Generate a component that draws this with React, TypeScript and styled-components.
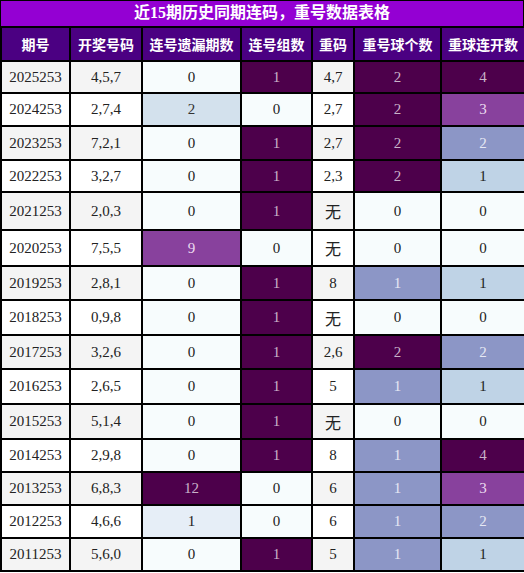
import styled, { createGlobalStyle } from "styled-components";

const GlobalStyle = createGlobalStyle`
  body {
    margin: 0;
    background: #ffffff;
  }
`;

type Row = {
  qh: string;
  kj: string;
  yl: number;
  zs: number;
  cm: string;
  cg: number;
  cl: number;
  h: number;
};

const rows: Row[] = [
  { qh: "2025253", kj: "4,5,7", yl: 0, zs: 1, cm: "4,7", cg: 2, cl: 4, h: 32 },
  { qh: "2024253", kj: "2,7,4", yl: 2, zs: 0, cm: "2,7", cg: 2, cl: 3, h: 33 },
  { qh: "2023253", kj: "7,2,1", yl: 0, zs: 1, cm: "2,7", cg: 2, cl: 2, h: 34 },
  { qh: "2022253", kj: "3,2,7", yl: 0, zs: 1, cm: "2,3", cg: 2, cl: 1, h: 32 },
  { qh: "2021253", kj: "2,0,3", yl: 0, zs: 1, cm: "无", cg: 0, cl: 0, h: 38 },
  { qh: "2020253", kj: "7,5,5", yl: 9, zs: 0, cm: "无", cg: 0, cl: 0, h: 36 },
  { qh: "2019253", kj: "2,8,1", yl: 0, zs: 1, cm: "8", cg: 1, cl: 1, h: 34 },
  { qh: "2018253", kj: "0,9,8", yl: 0, zs: 1, cm: "无", cg: 0, cl: 0, h: 35 },
  { qh: "2017253", kj: "3,2,6", yl: 0, zs: 1, cm: "2,6", cg: 2, cl: 2, h: 34 },
  { qh: "2016253", kj: "2,6,5", yl: 0, zs: 1, cm: "5", cg: 1, cl: 1, h: 35 },
  { qh: "2015253", kj: "5,1,4", yl: 0, zs: 1, cm: "无", cg: 0, cl: 0, h: 35 },
  { qh: "2014253", kj: "2,9,8", yl: 0, zs: 1, cm: "8", cg: 1, cl: 4, h: 33 },
  { qh: "2013253", kj: "6,8,3", yl: 12, zs: 0, cm: "6", cg: 1, cl: 3, h: 33 },
  { qh: "2012253", kj: "4,6,6", yl: 1, zs: 0, cm: "6", cg: 1, cl: 2, h: 33 },
  { qh: "2011253", kj: "5,6,0", yl: 0, zs: 1, cm: "5", cg: 1, cl: 1, h: 33 },
];

// BuPu style heat colours
const heat: Record<string, [string, string]> = {
  zero: ["#f7fcfd", "#222222"],
  pale: ["#e6eef7", "#222222"],
  light: ["#d3e1ed", "#333333"],
  blue: ["#bfd3e6", "#222222"],
  mid: ["#8c96c6", "#e6e8f4"],
  violet: ["#88419d", "#ecdcf0"],
  dark: ["#4d004b", "#c9b3c9"],
};

const ylColor = (v: number) =>
  v === 0 ? heat.zero : v === 1 ? heat.pale : v === 2 ? heat.light : v >= 12 ? heat.dark : heat.violet;
const zsColor = (v: number) => (v === 0 ? heat.zero : heat.dark);
const cgColor = (v: number) => (v === 0 ? heat.zero : v === 1 ? heat.mid : heat.dark);
const clColor = (v: number) =>
  v === 0 ? heat.zero : v === 1 ? heat.blue : v === 2 ? heat.mid : v === 3 ? heat.violet : heat.dark;

const App = () => {
  return (
    <Wrap>
      <GlobalStyle />
      <Title>近15期历史同期连码，重号数据表格</Title>
      <Table>
        <colgroup>
          <col style={{ width: 69 }} />
          <col style={{ width: 72 }} />
          <col style={{ width: 99 }} />
          <col style={{ width: 71 }} />
          <col style={{ width: 42 }} />
          <col style={{ width: 87 }} />
          <col style={{ width: 84 }} />
        </colgroup>
        <thead>
          <tr>
            <Th>期号</Th>
            <Th>开奖号码</Th>
            <Th>连号遗漏期数</Th>
            <Th>连号组数</Th>
            <Th>重码</Th>
            <Th>重号球个数</Th>
            <Th>重球连开数</Th>
          </tr>
        </thead>
        <tbody>
          {rows.map((r, i) => {
            const stripe = i % 2 === 0 ? "#f4f4f4" : "#ffffff";
            const yl = ylColor(r.yl);
            const zs = zsColor(r.zs);
            const cg = cgColor(r.cg);
            const cl = clColor(r.cl);
            return (
              <Tr key={r.qh} $h={r.h}>
                <Td $bg={stripe}>{r.qh}</Td>
                <Td $bg={stripe}>{r.kj}</Td>
                <Td $bg={yl[0]} $fg={yl[1]}>{r.yl}</Td>
                <Td $bg={zs[0]} $fg={zs[1]}>{r.zs}</Td>
                <Td $bg={stripe} $big={r.cm === "无"}>{r.cm}</Td>
                <Td $bg={cg[0]} $fg={cg[1]}>{r.cg}</Td>
                <Td $bg={cl[0]} $fg={cl[1]}>{r.cl}</Td>
              </Tr>
            );
          })}
        </tbody>
      </Table>
    </Wrap>
  );
};

export default App;

const Wrap = styled.div`
  width: 524px;
`;

const Title = styled.div`
  box-sizing: border-box;
  height: 26px;
  background: #9400d3;
  border: 1px solid #000;
  border-bottom: none;
  color: #ffffff;
  font-family: "Liberation Serif", "Noto Sans CJK SC", serif;
  font-weight: 700;
  font-size: 16px;
  line-height: 24px;
  text-align: center;
`;

const Table = styled.table`
  width: 524px;
  table-layout: fixed;
  border-collapse: collapse;
  border: 2px solid #000;
`;

const Th = styled.th`
  height: 32px;
  padding: 0;
  background: #4b0082;
  color: #ffffff;
  border: 2px solid #000;
  font-family: "Noto Sans CJK SC", "Liberation Sans", sans-serif;
  font-weight: 700;
  font-size: 14px;
  text-align: center;
  white-space: nowrap;
`;

const Tr = styled.tr<{ $h: number }>`
  height: ${(p) => p.$h}px;
`;

const Td = styled.td<{ $bg: string; $fg?: string; $big?: boolean }>`
  padding: 0;
  border: 2px solid #000;
  background: ${(p) => p.$bg};
  color: ${(p) => p.$fg || "#222222"};
  font-family: ${(p) =>
    p.$big
      ? `"Noto Sans CJK SC", sans-serif`
      : `"Liberation Serif", "Noto Sans CJK SC", serif`};
  font-size: ${(p) => (p.$big ? "16px" : "15px")};
  line-height: 1;
  text-align: center;
  white-space: nowrap;
`;
